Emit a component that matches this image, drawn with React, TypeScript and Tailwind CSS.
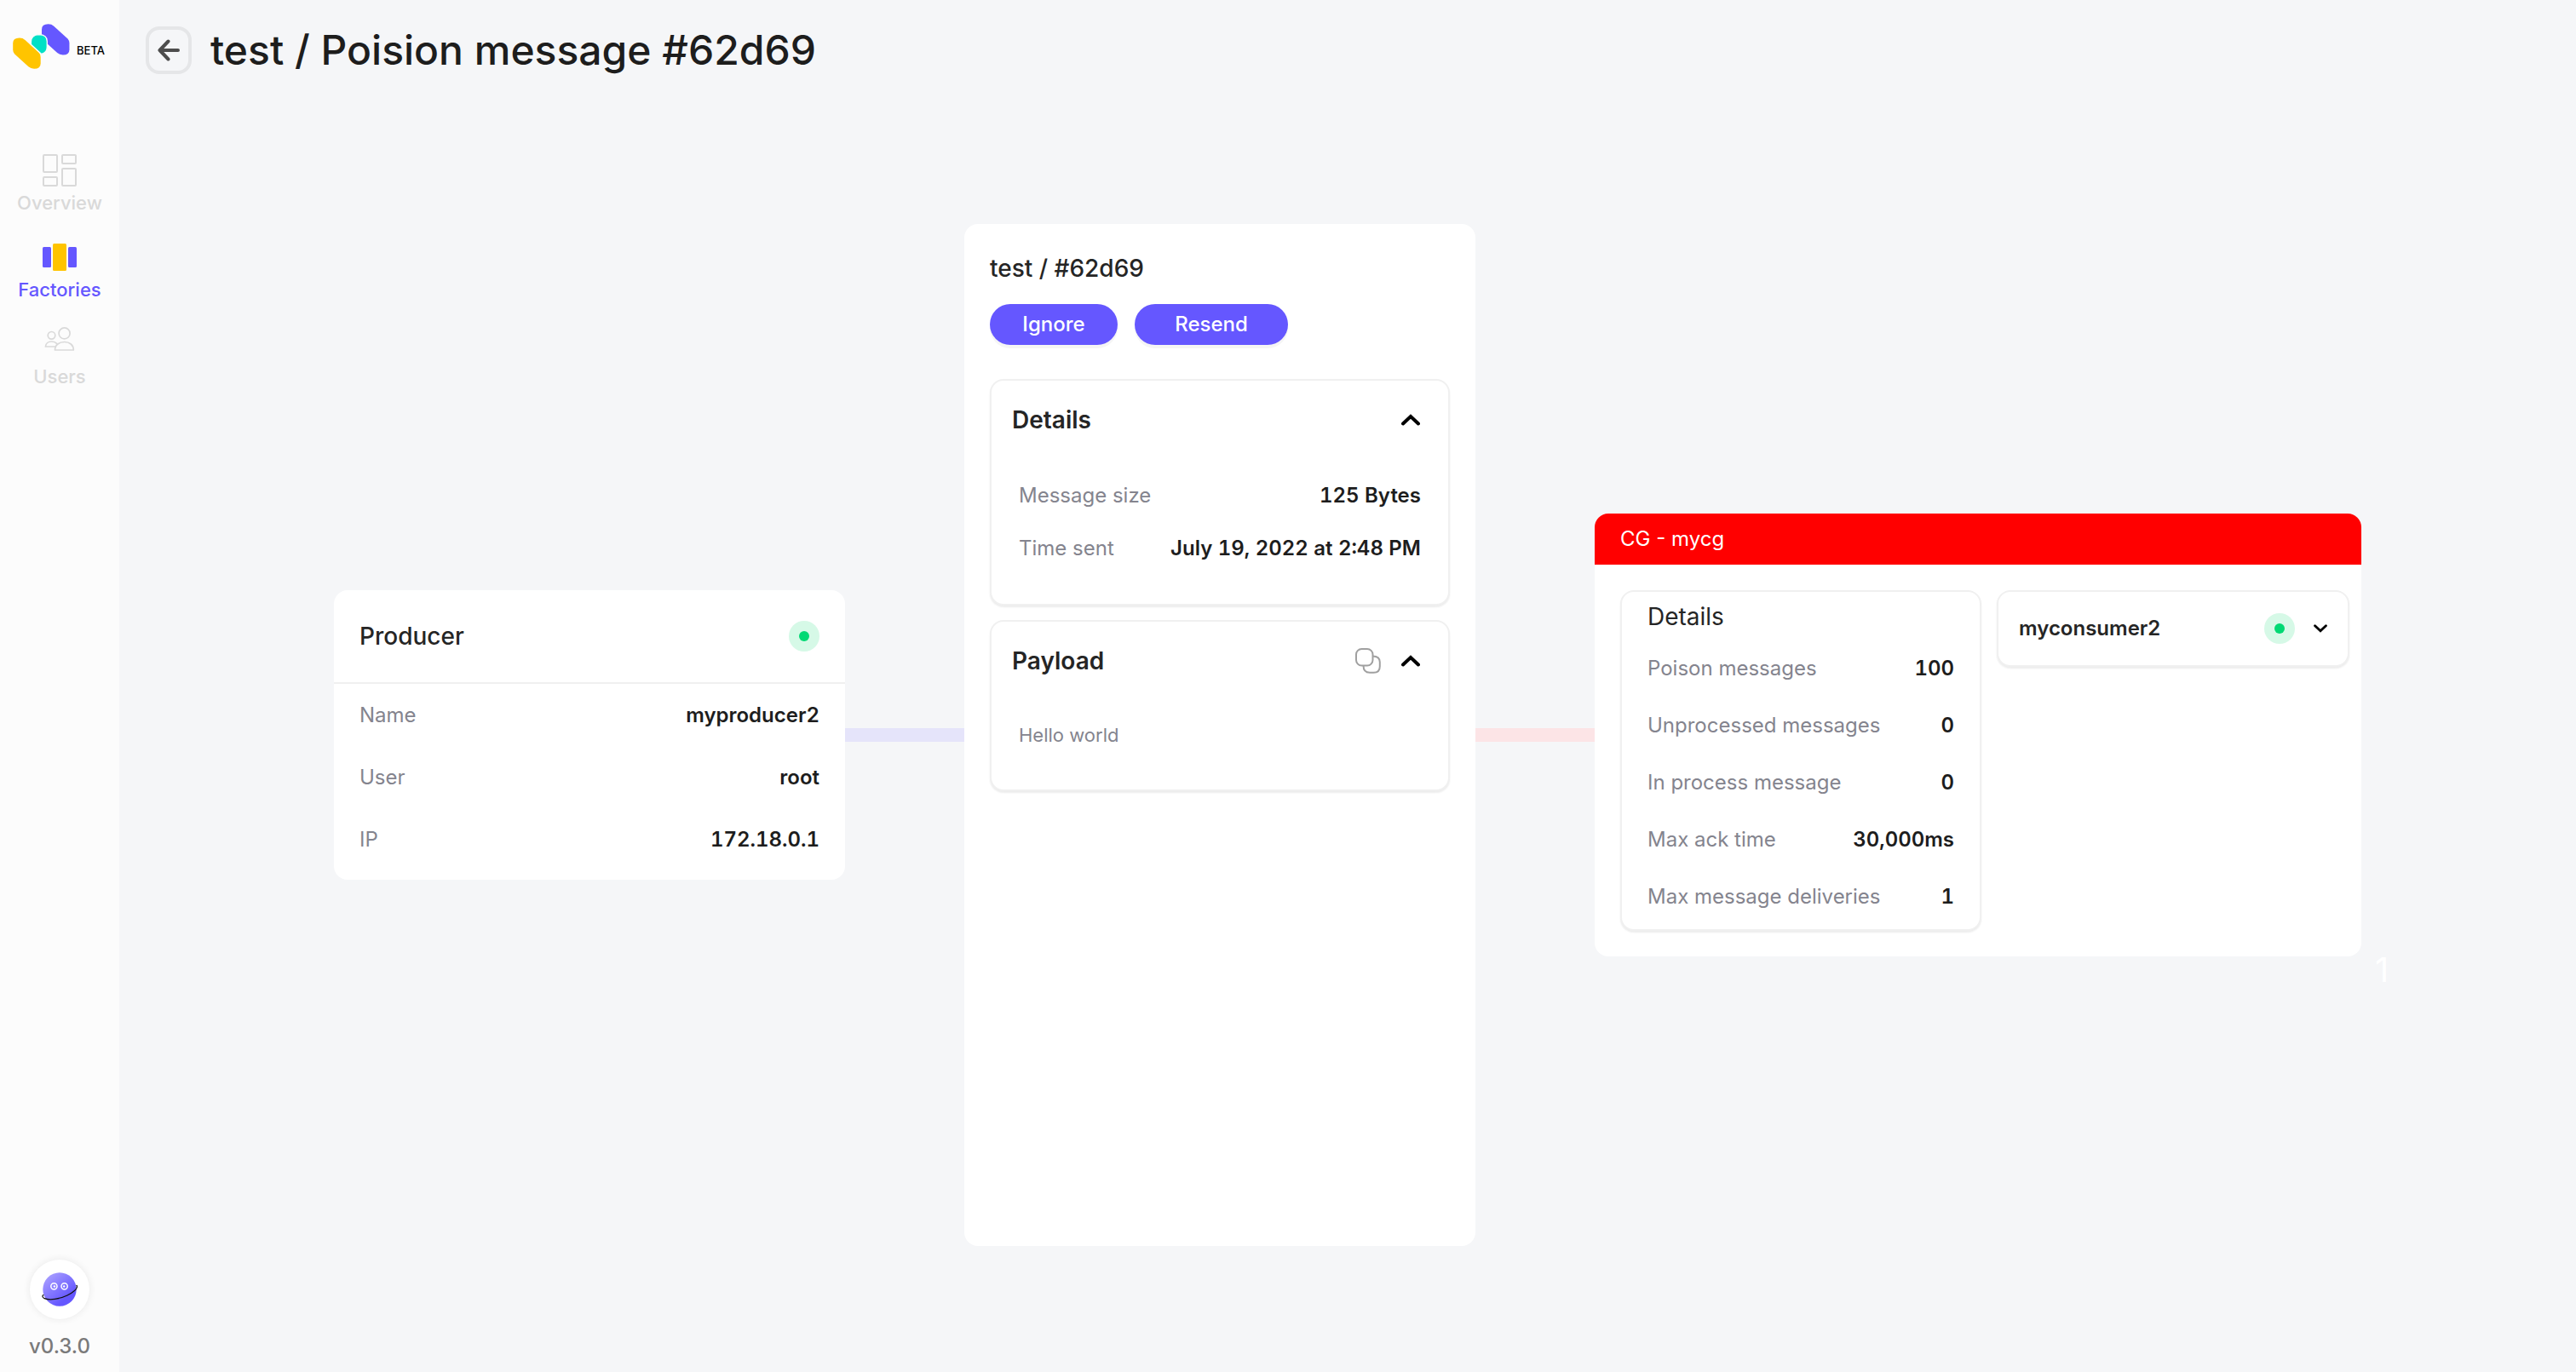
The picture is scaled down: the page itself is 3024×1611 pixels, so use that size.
import React from "react";

type Row = { label: string; value: string };

const producerRows: Row[] = [
  { label: "Name", value: "myproducer2" },
  { label: "User", value: "root" },
  { label: "IP", value: "172.18.0.1" },
];

const messageRows: Row[] = [
  { label: "Message size", value: "125 Bytes" },
  { label: "Time sent", value: "July 19, 2022 at 2:48 PM" },
];

const groupRows: Row[] = [
  { label: "Poison messages", value: "100" },
  { label: "Unprocessed messages", value: "0" },
  { label: "In process message", value: "0" },
  { label: "Max ack time", value: "30,000ms" },
  { label: "Max message deliveries", value: "1" },
];

function Logo() {
  return (
    <svg viewBox="45 84 201 160" className="h-[53px] w-[67px]" aria-hidden="true">
      <path
        fill="#ffc400"
        d="M45 153Q45 134 68 134Q80 134 88 141L137 186Q143 192 143 202V224Q143 243 120 243Q108 243 100 236L51 191Q45 185 45 175Z"
      />
      <path
        fill="#6557ff"
        d="M147 104Q147 85 170 85Q182 85 190 92L239 137Q245 143 245 153V175Q245 194 222 194Q210 194 202 187L153 142Q147 136 147 126Z"
      />
      <path
        fill="#00e0c6"
        stroke="#fcfcfc"
        strokeWidth="4"
        d="M137 122Q166 122 166 146V166Q166 186 146 191L109 157V148Q109 123 137 122Z"
      />
    </svg>
  );
}

function OverviewIcon() {
  return (
    <svg viewBox="0 0 40 38" className="h-[38px] w-10" fill="none" stroke="currentColor" strokeWidth="2" aria-hidden="true">
      <rect x="1" y="1" width="16" height="20" rx="1" />
      <rect x="23" y="1" width="16" height="10" rx="1" />
      <rect x="1" y="27" width="16" height="10" rx="1" />
      <rect x="23" y="17" width="16" height="20" rx="1" />
    </svg>
  );
}

function FactoriesIcon() {
  return (
    <svg viewBox="0 0 40 32" className="h-8 w-10" aria-hidden="true">
      <rect x="0" y="4" width="10" height="24" rx="1.5" fill="#6557ff" />
      <rect x="12" y="0" width="16" height="32" rx="1.5" fill="#ffc400" />
      <rect x="30" y="4" width="10" height="24" rx="1.5" fill="#6557ff" />
    </svg>
  );
}

function UsersIcon() {
  return (
    <svg viewBox="0 0 36 28" className="mb-3 h-7 w-9" fill="none" stroke="currentColor" strokeWidth="1.7" strokeLinejoin="round" strokeLinecap="round" aria-hidden="true">
      <circle cx="23.6" cy="7.4" r="6.5" />
      <circle cx="8.5" cy="9.8" r="4.3" />
      <path d="M12.5 27C12.5 21 17.5 17.5 23.6 17.5S34.3 21 34.3 27Z" />
      <path d="M12.8 23H1.4C1.7 19.2 4.8 17 8.6 17c2.4 0 4.6.8 6 2.4" />
    </svg>
  );
}

function Planet() {
  return (
    <svg viewBox="0 0 42 40" className="h-10 w-[42px]" fill="none" aria-hidden="true">
      <defs>
        <linearGradient id="planet" x1="5" y1="5" x2="27" y2="32" gradientUnits="userSpaceOnUse">
          <stop stopColor="#a79dff" />
          <stop offset="1" stopColor="#6557ff" />
        </linearGradient>
      </defs>
      <circle cx="21" cy="20" r="19.7" fill="url(#planet)" />
      <circle cx="14.4" cy="16.3" r="3.6" stroke="#fff" strokeWidth="1.5" />
      <circle cx="26.6" cy="16.3" r="3.6" stroke="#fff" strokeWidth="1.5" />
      <circle cx="14.9" cy="16.5" r="1.2" fill="#fff" />
      <circle cx="26.2" cy="16.5" r="1.2" fill="#fff" />
      <path d="M2 26.6C.2 27.6.8 29.6 3.2 30.6C9 33 21 31.6 30 27C36.500 23.600 41.500 19.500 41.500 16.500C41.500 15.700 41.200 15.400 40.800 15.300" stroke="#111" strokeWidth="1.2" strokeLinecap="round" />
    </svg>
  );
}

function Chevron({ up = false, small = false }: { up?: boolean; small?: boolean }) {
  return (
    <svg
      viewBox="0 0 22 14"
      className={small ? "h-[10px] w-4" : "h-[14px] w-[22px]"}
      fill="none"
      stroke="#000"
      strokeWidth="4"
      strokeLinecap="round"
      strokeLinejoin="miter"
      aria-hidden="true"
    >
      <path d={up ? "M2 11.500L11 3L20 11.500" : "M2 2.500L11 11L20 2.500"} />
    </svg>
  );
}

function CopyIcon() {
  return (
    <svg viewBox="0 0 30 30" className="h-[30px] w-[30px]" fill="none" stroke="#a0a0a0" strokeWidth="2" aria-hidden="true">
      <rect x="1" y="1" width="19.500" height="19.500" rx="6.500" />
      <path d="M20.500 9.500C25.500 9.500 28.800 11.500 28.800 16.500V21.500C28.800 26.500 26 28.800 21.500 28.800H17C12.500 28.800 9.500 26.500 9.500 20.500" />
    </svg>
  );
}

function StatusDot() {
  return (
    <span role="img" aria-label="Active" className="flex size-9 items-center justify-center rounded-full bg-[#d6f9e7]">
      <span className="size-3 rounded-full bg-[#00d973]" />
    </span>
  );
}

function NavItem({ icon, label, active = false }: { icon: React.ReactNode; label: string; active?: boolean }) {
  return (
    <a
      href="#"
      aria-current={active ? "page" : undefined}
      className={`flex flex-col items-center text-[22px] leading-8 font-medium ${active ? "text-[#6557ff]" : "text-[#d9d9d9]"}`}
    >
      <span className="flex h-11 items-center">{icon}</span>
      <span>{label}</span>
    </a>
  );
}

function Rows({ rows, className }: { rows: Row[]; className: string }) {
  return (
    <dl className={`flex flex-col text-2xl ${className}`}>
      {rows.map((row) => (
        <div key={row.label} className="flex items-center justify-between whitespace-nowrap">
          <dt className="text-[#84848e]">{row.label}</dt>
          <dd className="font-semibold text-[#1d1d1d] tabular-nums">{row.value}</dd>
        </div>
      ))}
    </dl>
  );
}

const cardClass = "rounded-2xl border-2 border-[#f0f0f0] bg-white shadow-[0_2px_2px_#ededed]";

export default function App() {
  return (
    <div className="flex min-h-screen bg-[#f5f6f8] font-['Inter',sans-serif] text-[#252525]">
      <aside className="flex w-[140px] shrink-0 flex-col items-center bg-[#fcfcfc] pb-3.5 pt-7">
        <div className="flex w-full items-center gap-2 pl-[15px]">
          <Logo />
          <span className="pt-2 text-[13px] leading-4 font-medium text-black">BETA</span>
        </div>
        <nav aria-label="Main" className="mt-[97px] flex flex-col gap-[26px]">
          <NavItem icon={<OverviewIcon />} label="Overview" />
          <NavItem icon={<FactoriesIcon />} label="Factories" active />
          <NavItem icon={<UsersIcon />} label="Users" />
        </nav>
        <button type="button" aria-label="Account" className="mt-auto flex size-[70px] items-center justify-center rounded-full bg-white shadow-[0_0_8px_#e8e8e8]">
          <Planet />
        </button>
        <p className="mt-4 text-2xl font-medium text-[#7a7a7a]">v0.3.0</p>
      </aside>

      <div className="flex min-w-0 grow flex-col">
        <header className="flex items-center gap-[22px] px-[31px] pb-7 pt-[31px]">
          <button type="button" aria-label="Back" className="flex h-14 w-[54px] items-center justify-center rounded-2xl border-4 border-[#e5e6e8]">
            <svg viewBox="0 0 26 26" className="size-[26px]" fill="none" stroke="#4d4d4d" strokeWidth="4" strokeLinecap="round" strokeLinejoin="round" aria-hidden="true">
              <path d="M24 13H2.500M12.500 2.500L2.500 13L12.500 23.500" />
            </svg>
          </button>
          <h1 className="text-5xl leading-none font-medium text-[#1d1d1d]">test / Poision message #62d69</h1>
        </header>

        <main className="grid grow grid-cols-[60fr_14fr_60fr_14fr_90fr] items-center px-[252px]">
          <section aria-label="Producer" className="rounded-2xl bg-white">
            <div className="flex h-[110px] items-center justify-between border-b-2 border-[#f0f0f0] px-[30px]">
              <h2 className="text-[28px] font-medium">Producer</h2>
              <StatusDot />
            </div>
            <Rows rows={producerRows} className="gap-[41px] px-[30px] pb-[31px] pt-[21px]" />
          </section>

          <div className="h-4 bg-[#e5e4fa]" />

          <section aria-label="Message" className="flex min-h-[1200px] flex-col rounded-2xl bg-white px-[30px] pt-[31px]">
            <h2 className="text-[28px] leading-[42px] font-medium">test / #62d69</h2>
            <div className="mt-[21px] flex gap-5 text-2xl font-medium text-white">
              <button type="button" className="h-12 w-[150px] rounded-full bg-[#6557ff] shadow-[0_4px_0_#f5f5f5]">Ignore</button>
              <button type="button" className="h-12 w-[180px] rounded-full bg-[#6557ff] shadow-[0_4px_0_#f5f5f5]">Resend</button>
            </div>
            <div className={`mt-10 h-[266px] ${cardClass}`}>
              <div className="flex items-center justify-between pl-6 pr-[33px] pt-[25px]">
                <h3 className="text-[28px] leading-[42px] font-semibold">Details</h3>
                <button type="button" aria-label="Collapse details"><Chevron up /></button>
              </div>
              <Rows rows={messageRows} className="gap-[30px] px-8 pt-[52px]" />
            </div>
            <div className={`mt-[17px] h-[201px] ${cardClass}`}>
              <div className="flex items-center pl-6 pr-[33px] pt-[25px]">
                <h3 className="text-[28px] leading-[42px] font-semibold">Payload</h3>
                <button type="button" aria-label="Copy payload" className="ml-auto"><CopyIcon /></button>
                <button type="button" aria-label="Collapse payload" className="ml-6"><Chevron up /></button>
              </div>
              <p className="px-8 pt-[50px] text-[22px] leading-8 text-[#84848e]">Hello world</p>
            </div>
          </section>

          <div className="h-4 bg-[#fce4e6]" />

          <section aria-label="Consumer group" className="relative rounded-2xl bg-white">
            <h2 className="flex h-[60px] items-center rounded-t-2xl bg-[#ff0000] px-[30px] text-2xl text-white">CG - mycg</h2>
            <div className="flex items-start gap-[18px] py-[30px] pl-[30px] pr-[14px]">
              <div className={`h-[400px] w-[424px] ${cardClass}`}>
                <h3 className="px-[30px] pt-2 text-[28px] leading-[42px]">Details</h3>
                <Rows rows={groupRows} className="gap-[35px] px-[30px] pt-6" />
              </div>
              <div className={`flex h-[90px] grow items-center px-6 ${cardClass}`}>
                <h3 className="mr-auto text-2xl font-semibold">myconsumer2</h3>
                <StatusDot />
                <button type="button" aria-label="Expand myconsumer2" className="ml-[22px]"><Chevron small /></button>
              </div>
            </div>
            <span className="absolute left-full top-full ml-4 -mt-1 text-[40px] leading-none text-white">1</span>
          </section>
        </main>
      </div>
    </div>
  );
}
